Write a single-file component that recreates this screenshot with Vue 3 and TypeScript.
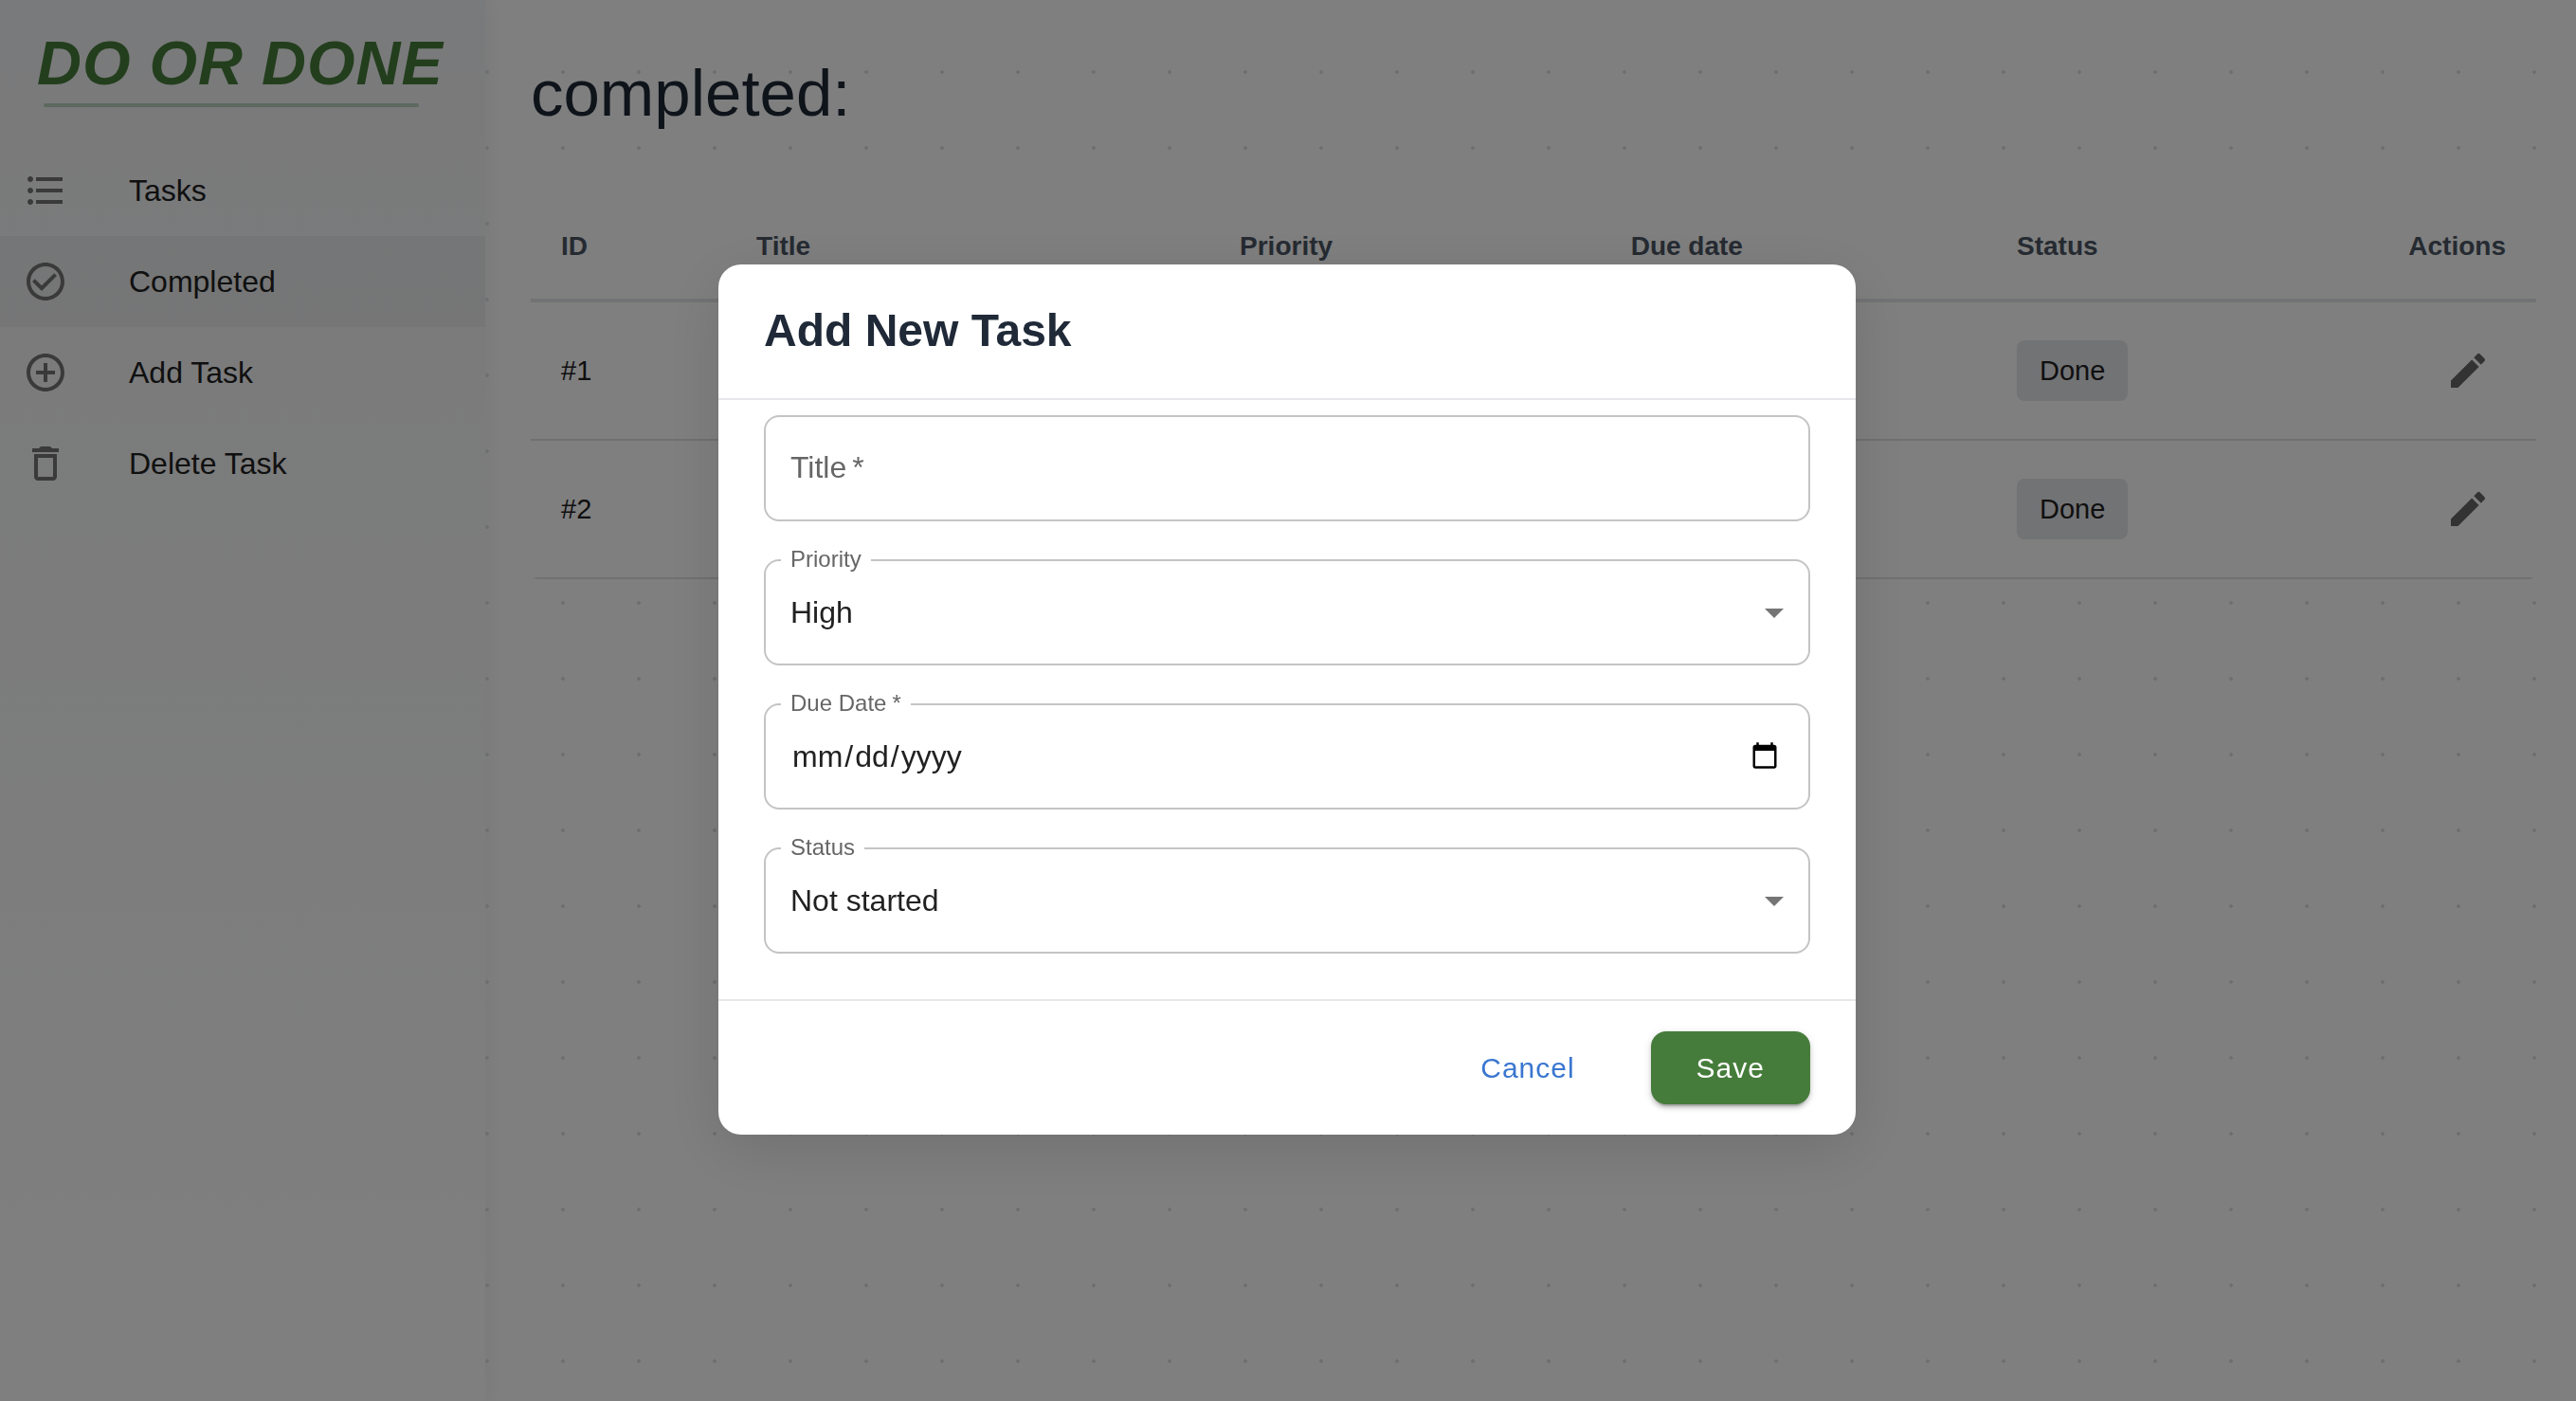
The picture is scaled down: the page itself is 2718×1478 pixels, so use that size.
<script setup lang="ts">
import { ref } from 'vue'

interface NavItem {
  label: string
  icon: string
}

interface Task {
  id: number
  status: string
}

const ring =
  'M12 2C6.48 2 2 6.48 2 12s4.48 10 10 10 10-4.48 10-10S17.52 2 12 2m0 18c-4.42 0-8-3.58-8-8s3.58-8 8-8 8 3.58 8 8-3.58 8-8 8'

const navItems: NavItem[] = [
  {
    label: 'Tasks',
    icon: 'M4 10.5c-.83 0-1.5.67-1.5 1.5s.67 1.5 1.5 1.5 1.5-.67 1.5-1.5-.67-1.5-1.5-1.5zm0-6c-.83 0-1.5.67-1.5 1.5S3.17 7.5 4 7.5 5.5 6.83 5.5 6 4.83 4.5 4 4.5zm0 12c-.83 0-1.5.68-1.5 1.5s.68 1.5 1.5 1.5 1.5-.68 1.5-1.5-.67-1.5-1.5-1.5zM7 19h14v-2H7v2zm0-6h14v-2H7v2zm0-8v2h14V5H7z',
  },
  { label: 'Completed', icon: 'M16.59 7.58 10 14.17l-3.59-3.58L5 12l5 5 8-8z' + ring },
  { label: 'Add Task', icon: 'M13 7h-2v4H7v2h4v4h2v-4h4v-2h-4z' + ring },
  {
    label: 'Delete Task',
    icon: 'M6 19c0 1.1.9 2 2 2h8c1.1 0 2-.9 2-2V7H6zM8 9h8v10H8zm7.5-5-.7-.7c-.2-.2-.45-.3-.7-.3H9.9c-.25 0-.5.1-.7.3l-.7.7H5v2h14V4z',
  },
]

const pencil =
  'M3 17.25V21h3.75L17.81 9.94l-3.75-3.75zM20.71 7.04c.39-.39.39-1.02 0-1.41l-2.34-2.34a.9959.9959 0 0 0-1.41 0l-1.83 1.83 3.75 3.75z'

const active = ref('Completed')
const tasks: Task[] = [
  { id: 1, status: 'Done' },
  { id: 2, status: 'Done' },
]

const title = ref('')
const priority = ref('High')
const dueDate = ref('')
const status = ref('Not started')
</script>

<template>
  <div class="app">
    <aside class="sidebar">
      <div class="logo">DO OR DONE</div>
      <nav class="nav">
        <a
          v-for="item in navItems"
          :key="item.label"
          href="#"
          class="nav-item"
          :class="{ selected: item.label === active }"
          @click.prevent="active = item.label"
        >
          <svg class="icon" viewBox="0 0 24 24" aria-hidden="true"><path :d="item.icon" /></svg>
          <span>{{ item.label }}</span>
        </a>
      </nav>
    </aside>

    <main class="main">
      <h1 class="heading">completed:</h1>
      <table class="tasks">
        <colgroup>
          <col class="c-id" />
          <col class="c-title" />
          <col class="c-priority" />
          <col class="c-due" />
          <col class="c-status" />
          <col class="c-actions" />
        </colgroup>
        <thead>
          <tr>
            <th>ID</th>
            <th>Title</th>
            <th>Priority</th>
            <th>Due date</th>
            <th>Status</th>
            <th class="right">Actions</th>
          </tr>
        </thead>
        <tbody>
          <tr v-for="task in tasks" :key="task.id">
            <td>#{{ task.id }}</td>
            <td></td>
            <td></td>
            <td></td>
            <td><span class="badge">{{ task.status }}</span></td>
            <td class="right">
              <button type="button" class="edit" aria-label="Edit">
                <svg class="icon" viewBox="0 0 24 24" aria-hidden="true"><path :d="pencil" /></svg>
              </button>
            </td>
          </tr>
        </tbody>
      </table>
    </main>

    <div class="backdrop">
      <form class="dialog" role="dialog" aria-labelledby="dialog-title" @submit.prevent>
        <h2 id="dialog-title" class="dialog-title">Add New Task</h2>
        <div class="fields">
          <div class="field">
            <label for="title" class="inside">Title<span class="star">*</span></label>
            <input id="title" v-model="title" type="text" />
          </div>
          <div class="field">
            <label for="priority">Priority</label>
            <select id="priority" v-model="priority">
              <option>High</option>
            </select>
            <svg class="icon arrow" viewBox="0 0 24 24" aria-hidden="true"><path d="m7 10 5 5 5-5z" /></svg>
          </div>
          <div class="field">
            <label for="due">Due Date<span class="star">*</span></label>
            <input id="due" v-model="dueDate" type="date" />
          </div>
          <div class="field">
            <label for="status">Status</label>
            <select id="status" v-model="status">
              <option>Not started</option>
            </select>
            <svg class="icon arrow" viewBox="0 0 24 24" aria-hidden="true"><path d="m7 10 5 5 5-5z" /></svg>
          </div>
        </div>
        <div class="actions">
          <button type="button" class="btn cancel">Cancel</button>
          <button type="submit" class="btn save">Save</button>
        </div>
      </form>
    </div>
  </div>
</template>

<style>
body {
  margin: 0;
  background: #fff;
}
</style>

<style scoped>
.app,
.app * {
  box-sizing: border-box;
}
.app {
  display: flex;
  min-height: 100vh;
  font-family: 'Liberation Sans', Arial, sans-serif;
  font-size: 32px;
  color: #212121;
}
.icon {
  width: 48px;
  height: 48px;
  flex: none;
  display: block;
  fill: currentColor;
}
.sidebar {
  flex: none;
  width: 512px;
  background: linear-gradient(180deg, #f3f4f6 0%, #ffffff 100%);
  box-shadow: 4px 0 20px rgba(0, 0, 0, 0.05);
}
.logo {
  margin: 33px 24px 40px;
  padding-left: 15px;
  font-size: 65px;
  line-height: 68px;
  font-weight: 700;
  font-style: italic;
  letter-spacing: 1px;
  white-space: nowrap;
  color: #467c3b;
}
.logo::after {
  content: '';
  display: block;
  width: 396px;
  height: 4px;
  margin: 8px 0 0 7px;
  border-radius: 2px;
  background: #b8d2be;
}
.nav-item {
  display: flex;
  align-items: center;
  gap: 64px;
  height: 96px;
  padding: 0 24px;
  color: #212121;
  text-decoration: none;
}
.nav-item .icon {
  color: #757575;
}
.nav-item.selected {
  background: rgba(0, 0, 0, 0.04);
}
.main {
  flex: 1;
  min-width: 0;
  padding: 57px 42px 48px 48px;
  background-image: radial-gradient(circle at 2px 2px, #dcdee0 2px, transparent 2px);
  background-size: 80px 80px;
  background-position: 0 74px;
}
.heading {
  margin: 0 0 61px;
  font-size: 69px;
  line-height: 84px;
  font-weight: 400;
  color: #1f2937;
}
.tasks {
  width: 100%;
  table-layout: fixed;
  border-collapse: separate;
  border-spacing: 0;
  background: #fff;
  border-radius: 8px;
  overflow: hidden;
}
.c-id {
  width: 9.74%;
}
.c-title {
  width: 24.1%;
}
.c-priority {
  width: 19.5%;
}
.c-due {
  width: 19.25%;
}
.c-status {
  width: 14%;
}
th,
td {
  padding: 0 32px;
  text-align: left;
}
th {
  height: 117px;
  padding-top: 2px;
  font-size: 28px;
  font-weight: 700;
  color: #4b5563;
  border-bottom: 4px solid #e5e7eb;
}
td {
  height: 146px;
  font-size: 29px;
  border-bottom: 2px solid #e0e0e0;
}
.right {
  text-align: right;
}
.badge {
  display: inline-block;
  vertical-align: middle;
  padding: 0 24px;
  line-height: 64px;
  border-radius: 8px;
  background: #e5e7eb;
}
.edit {
  display: inline-block;
  vertical-align: middle;
  padding: 16px;
  border: 0;
  background: none;
  color: #666;
}
.backdrop {
  position: fixed;
  inset: 0;
  display: flex;
  align-items: center;
  justify-content: center;
  padding: 0 2px 2px 0;
  background: rgba(0, 0, 0, 0.5);
}
.dialog {
  width: 1200px;
  max-width: 90%;
  border-radius: 24px;
  background: #fff;
  box-shadow: 0 16px 64px rgba(0, 0, 0, 0.12);
}
.dialog-title {
  margin: 0;
  padding: 33px 48px 35px;
  font-size: 48px;
  line-height: 73px;
  font-weight: 700;
  color: #1f2937;
  border-bottom: 2px solid #e5e7eb;
}
.fields {
  display: flex;
  flex-direction: column;
  gap: 40px;
  padding: 16px 48px 48px;
}
.field {
  position: relative;
  display: flex;
  height: 112px;
  border: 2px solid #c4c4c4;
  border-radius: 16px;
}
.field label {
  position: absolute;
  left: 16px;
  top: -14px;
  padding: 0 10px;
  font-size: 24px;
  line-height: 24px;
  color: #666;
  background: #fff;
}
.field label.inside {
  top: 0;
  font-size: 32px;
  line-height: 106px;
  background: none;
}
.star {
  margin-left: 6px;
}
.field input,
.field select {
  flex: 1;
  min-width: 0;
  padding: 0 28px 0 26px;
  border: 0;
  outline: 0;
  border-radius: 16px;
  background: none;
  font: inherit;
  color: #212121;
  appearance: none;
}
.arrow {
  position: absolute;
  right: 12px;
  top: 30px;
  color: #757575;
  pointer-events: none;
}
input::-webkit-datetime-edit-month-field,
input::-webkit-datetime-edit-day-field,
input::-webkit-datetime-edit-year-field {
  padding: 0 2px;
}
.actions {
  display: flex;
  justify-content: flex-end;
  gap: 32px;
  padding: 32px 48px;
  border-top: 2px solid #e5e7eb;
}
.btn {
  height: 77px;
  padding: 0 48px;
  border: 0;
  border-radius: 16px;
  background: none;
  font-family: inherit;
  font-size: 30px;
  letter-spacing: 1px;
}
.cancel {
  color: #3a76d0;
}
.save {
  color: #fff;
  background: #467c3b;
  box-shadow:
    0 6px 2px -4px rgba(0, 0, 0, 0.2),
    0 4px 4px rgba(0, 0, 0, 0.14),
    0 2px 10px rgba(0, 0, 0, 0.12);
}
</style>
